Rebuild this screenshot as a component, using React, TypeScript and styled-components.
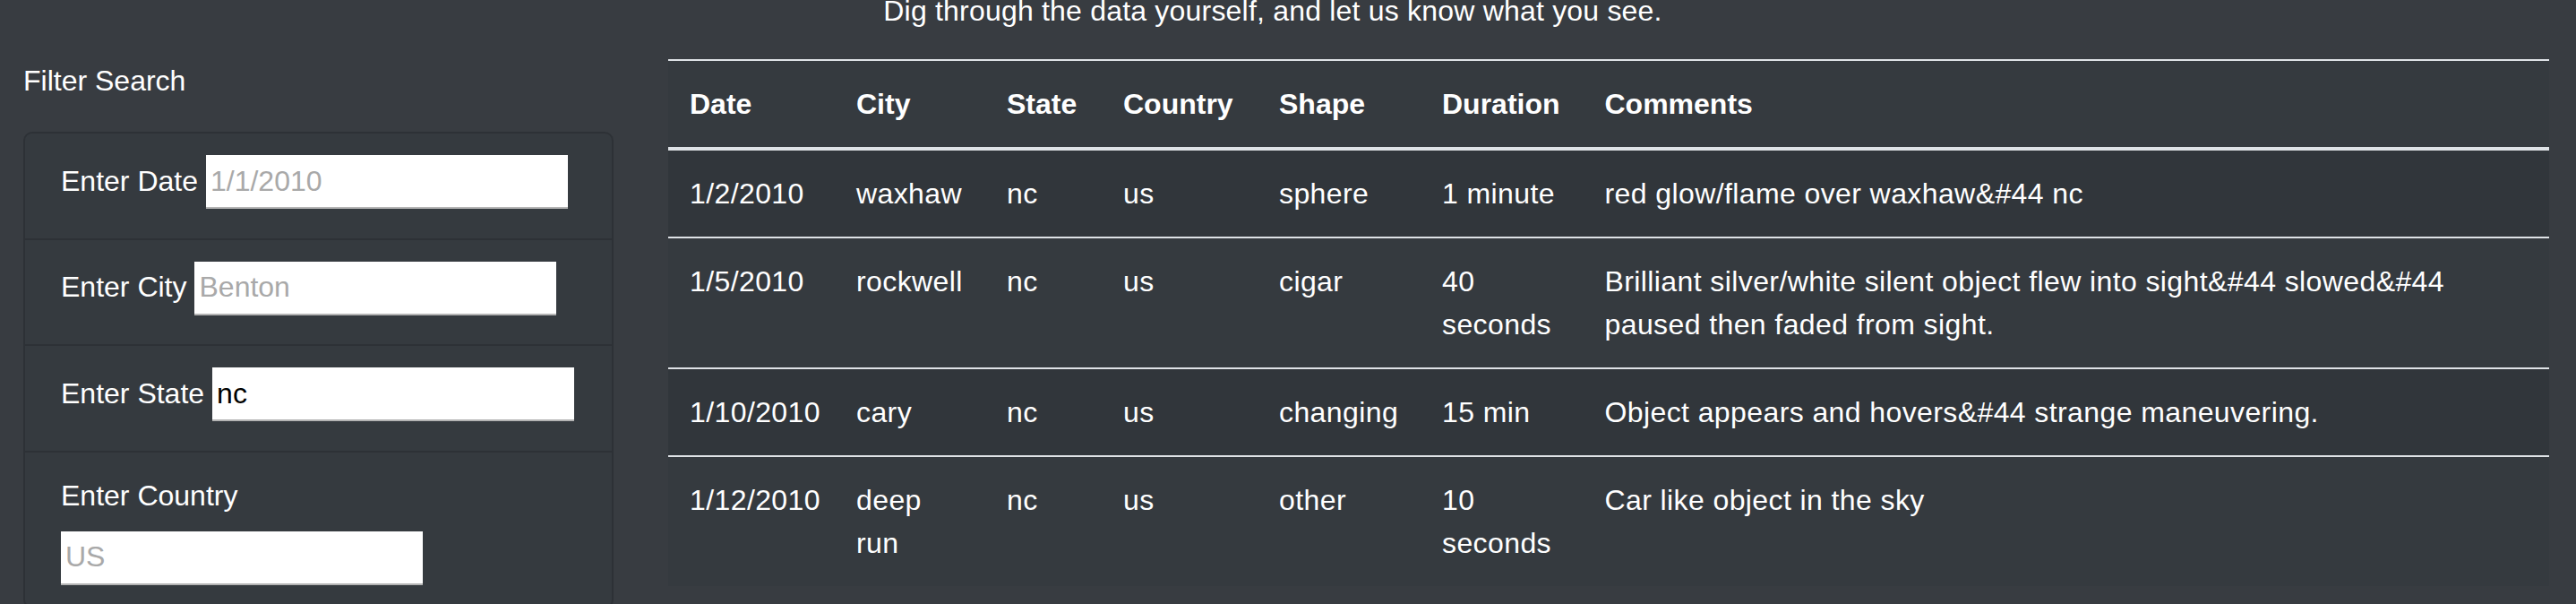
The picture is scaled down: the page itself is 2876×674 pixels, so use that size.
import React from "react";
import styled, {createGlobalStyle} from "styled-components";

const GlobalStyle = createGlobalStyle`
body {
  margin: 0;
  background: #383c41;
  color: #fff;
  font-family: "Liberation Sans", Arial, sans-serif;
  font-size: 32px;
  line-height: 48px;
}
`

const Page = styled.div`
padding: 0 30px 0 26px;
overflow: hidden;
height: 674px;
box-sizing: border-box;
`

const Intro = styled.p`
margin: -12px 30px 30px 0;
text-align: center;
letter-spacing: 0.2px;
`

const Columns = styled.div`
display: flex;
align-items: flex-start;
gap: 61px;
`

const Sidebar = styled.div`
flex: 0 0 659px;
`

const SideTitle = styled.div`
margin-bottom: 33px;
`

const FilterList = styled.ul`
list-style: none;
margin: 0;
padding: 0;
border: 2px solid rgba(0, 0, 0, 0.14);
border-radius: 10px;
background: #353a3f;
`

const FilterItem = styled.li<{ $stack?: boolean }>`
display: flex;
flex-wrap: ${p => p.$stack ? "wrap" : "nowrap"};
align-items: baseline;
column-gap: 9px;
padding: 24px 40px;
& + & {
  border-top: 2px solid rgba(0, 0, 0, 0.14);
}
`

const FieldLabel = styled.label<{ $stack?: boolean }>`
display: inline-block;
margin-bottom: 16px;
white-space: nowrap;
flex-basis: ${p => p.$stack ? "100%" : "auto"};
`

const FieldInput = styled.input`
flex: 0 0 auto;
box-sizing: border-box;
width: 404px;
height: 60px;
padding: 0 5px;
border: none;
border-bottom: 2px solid #b4b4b4;
background: #fff;
color: #000;
font-family: "Liberation Sans", Arial, sans-serif;
font-size: 32px;
outline: none;
&::placeholder {
  color: #a9a9a9;
}
`

const TableWrap = styled.div`
flex: 1 1 auto;
min-width: 0;
`

const DataTable = styled.table`
width: 100%;
table-layout: fixed;
border-collapse: collapse;
background: #353a3f;
`

const HeadCell = styled.th`
padding: 24px;
text-align: left;
vertical-align: bottom;
font-weight: bold;
border-top: 2px solid #dee2e6;
border-bottom: 4px solid #dee2e6;
`

const Row = styled.tr<{ $odd: boolean }>`
background: ${p => p.$odd ? "rgba(0, 0, 0, 0.06)" : "transparent"};
`

const Cell = styled.td`
padding: 24px;
vertical-align: top;
letter-spacing: 0.4px;
border-top: 2px solid #dee2e6;
`

const columns = [
    {title: "Date", width: 186},
    {title: "City", width: 168},
    {title: "State", width: 130},
    {title: "Country", width: 174},
    {title: "Shape", width: 182},
    {title: "Duration", width: 181.5},
    {title: "Comments", width: undefined},
]

const sightings = [
    ["1/2/2010", "waxhaw", "nc", "us", "sphere", "1 minute", "red glow/flame over waxhaw&#44 nc"],
    ["1/5/2010", "rockwell", "nc", "us", "cigar", "40 seconds", "Brilliant silver/white silent object flew into sight&#44 slowed&#44 paused then faded from sight."],
    ["1/10/2010", "cary", "nc", "us", "changing", "15 min", "Object appears and hovers&#44 strange maneuvering."],
    ["1/12/2010", "deep run", "nc", "us", "other", "10 seconds", "Car like object in the sky"],
]

const filters = [
    {label: "Enter Date", placeholder: "1/1/2010", value: undefined},
    {label: "Enter City", placeholder: "Benton", value: undefined},
    {label: "Enter State", placeholder: "", value: "nc"},
    {label: "Enter Country", placeholder: "US", value: undefined, stack: true},
]

function App() {
    return (
        <Page>
            <GlobalStyle/>
            <Intro>Dig through the data yourself, and let us know what you see.</Intro>
            <Columns>
                <Sidebar>
                    <SideTitle>Filter Search</SideTitle>
                    <FilterList>
                        {filters.map(f => (
                            <FilterItem key={f.label} $stack={f.stack}>
                                <FieldLabel $stack={f.stack}>{f.label}</FieldLabel>
                                <FieldInput type="text"
                                            placeholder={f.placeholder}
                                            defaultValue={f.value}/>
                            </FilterItem>
                        ))}
                    </FilterList>
                </Sidebar>
                <TableWrap>
                    <DataTable>
                        <colgroup>
                            {columns.map(c => <col key={c.title} style={c.width ? {width: c.width} : undefined}/>)}
                        </colgroup>
                        <thead>
                        <tr>
                            {columns.map(c => <HeadCell key={c.title}>{c.title}</HeadCell>)}
                        </tr>
                        </thead>
                        <tbody>
                        {sightings.map((row, i) => (
                            <Row key={row[0]} $odd={i % 2 === 0}>
                                {row.map((value, j) => <Cell key={j}>{value}</Cell>)}
                            </Row>
                        ))}
                        </tbody>
                    </DataTable>
                </TableWrap>
            </Columns>
        </Page>
    )
}

export default App
